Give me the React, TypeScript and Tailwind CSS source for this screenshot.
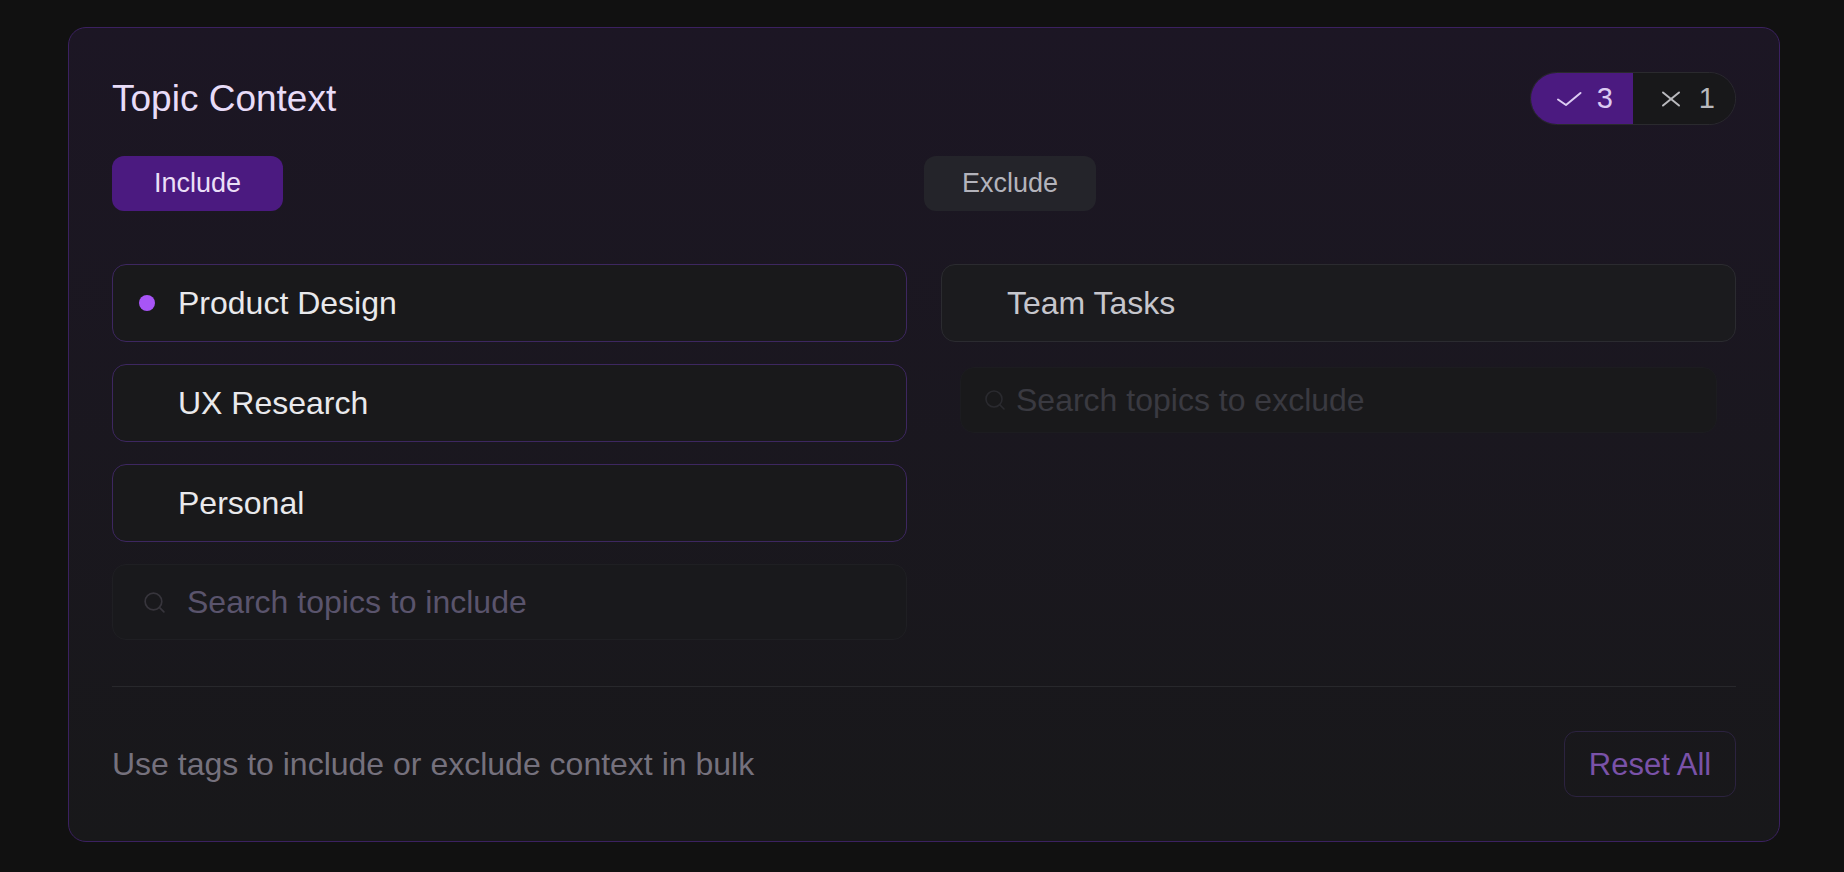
import { Search } from 'lucide-react';

const includeTopics = [
    { id: 'product-design', name: 'Product Design', active: true },
    { id: 'ux-research', name: 'UX Research', active: false },
    { id: 'personal', name: 'Personal', active: false },
];

const excludeTopics = [{ id: 'team-tasks', name: 'Team Tasks' }];

function TopicRow({ name, active, variant }: { name: string; active?: boolean; variant: 'include' | 'exclude' }) {
    const isInclude = variant === 'include';
    return (
        <div
            className={
                isInclude
                    ? 'flex h-[78px] items-center rounded-[14px] border border-[#3d2760] bg-[#19191b] pl-[26px] text-[32px] leading-none text-[#e9e9ec]'
                    : 'flex h-[78px] items-center rounded-[14px] border border-[#2b2b30] bg-[#1b1b1e] pl-[26px] text-[32px] leading-none text-[#c6c6cc]'
            }
        >
            <span className={active ? 'h-4 w-4 shrink-0 rounded-full bg-[#a855f7]' : 'h-4 w-4 shrink-0'} />
            <span className="ml-[23px]">{name}</span>
        </div>
    );
}

export default function App() {
    return (
        <div className="min-h-screen bg-[#111111] pt-[27px] font-['Liberation_Sans',Arial,sans-serif]">
            <section className="ml-[68px] w-[1712px] rounded-[18px] border border-[#3b2160] bg-gradient-to-b from-[#1c1624] to-[#18181a] px-[43px] pt-[44px] pb-[44px]">
                {/* Header */}
                <div className="flex h-[53px] items-center justify-between">
                    <h2 className="text-[37px] font-normal leading-none text-[#e8dcf8]">Topic Context</h2>
                    <div className="flex h-[53px] overflow-hidden rounded-full border border-[#2a2a2e] text-[29px] leading-none">
                        <div className="flex items-center bg-[#4b1a80] pl-[25px] pr-[20px] text-[#dccbf2]">
                            <svg width="26" height="16" viewBox="0 0 26 16" fill="none" stroke="currentColor" strokeWidth="2" strokeLinecap="round" strokeLinejoin="round">
                                <polyline points="2,8.5 10,14 24.5,2" />
                            </svg>
                            <span className="ml-[15px]">3</span>
                        </div>
                        <div className="flex items-center bg-[#18181a] pl-[28px] pr-[20px] text-[#b8b8bd]">
                            <svg width="20" height="16" viewBox="0 0 20 16" fill="none" stroke="currentColor" strokeWidth="2" strokeLinecap="round">
                                <line x1="2" y1="1.5" x2="18" y2="14.5" />
                                <line x1="18" y1="1.5" x2="2" y2="14.5" />
                            </svg>
                            <span className="ml-[18px]">1</span>
                        </div>
                    </div>
                </div>

                {/* Tabs */}
                <div className="mt-[31px] grid grid-cols-2">
                    <div>
                        <button className="flex h-[55px] w-[171px] items-center justify-center rounded-[12px] bg-[#4b1a80] text-[27px] leading-none text-[#eadff7]">
                            Include
                        </button>
                    </div>
                    <div>
                        <button className="flex h-[55px] w-[172px] items-center justify-center rounded-[12px] bg-[#24242a] text-[27px] leading-none text-[#b3b3bb]">
                            Exclude
                        </button>
                    </div>
                </div>

                {/* Topic lists */}
                <div className="mt-[53px] grid grid-cols-2 items-start gap-x-[34px]">
                    <div className="flex flex-col gap-[22px]">
                        {includeTopics.map((t) => (
                            <TopicRow key={t.id} name={t.name} active={t.active} variant="include" />
                        ))}
                        <div className="flex h-[76px] items-center rounded-[14px] border border-[#1f1f23] bg-[#19191c] pl-[29px] text-[32px] leading-none text-[#5a546c]">
                            <Search size={25} strokeWidth={1.6} className="shrink-0 text-[#37353c]" />
                            <span className="ml-[20px]">Search topics to include</span>
                        </div>
                    </div>
                    <div className="flex flex-col gap-[22px]">
                        {excludeTopics.map((t) => (
                            <TopicRow key={t.id} name={t.name} variant="exclude" />
                        ))}
                        <div className="mx-[19px] mt-[3px] flex h-[66px] items-center rounded-[14px] border border-[#1c1c20] bg-[#19191b] pl-[22px] text-[32px] leading-none text-[#3a3a41]">
                            <Search size={24} strokeWidth={1.6} className="shrink-0 text-[#2a2a2f]" />
                            <span className="ml-[9px]">Search topics to exclude</span>
                        </div>
                    </div>
                </div>

                <div className="mt-[46px] h-px bg-[#28282c]" />

                {/* Footer */}
                <div className="mt-[44px] flex items-center justify-between">
                    <p className="text-[32px] leading-none text-[#75717d]">Use tags to include or exclude context in bulk</p>
                    <button className="flex h-[66px] w-[172px] items-center justify-center rounded-[12px] border border-[#2c2340] text-[31px] leading-none text-[#7a52a8]">
                        Reset All
                    </button>
                </div>
            </section>
        </div>
    );
}
